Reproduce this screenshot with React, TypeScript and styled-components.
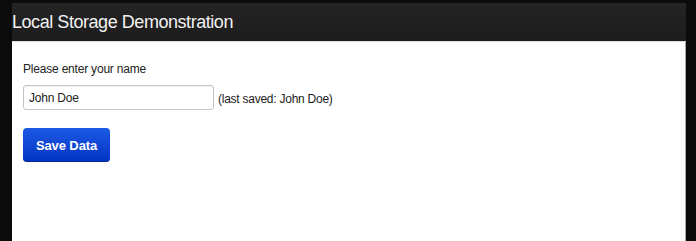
import React, { useState } from 'react';
import styled, { createGlobalStyle } from 'styled-components';

const GlobalStyle = createGlobalStyle`
  html, body {
    margin: 0;
    padding: 0;
    background: #0b0b0b;
  }
  body {
    font-family: "Liberation Sans", Arial, Helvetica, sans-serif;
  }
`;

const Frame = styled.div`
  height: 241px;
  box-sizing: border-box;
  padding: 3px 10px 0 12px;
  display: flex;
  flex-direction: column;
`;

const Header = styled.header`
  height: 38px;
  flex: 0 0 38px;
  display: flex;
  align-items: center;
  background: linear-gradient(#242424, #1c1c1c);
  color: #f2f2f2;
  font-size: 18px;
  letter-spacing: -0.45px;
`;

const Content = styled.main`
  flex: 1;
  background: #fff;
  border-top: 1px solid #dcdcdc;
  border-right: 1px solid #a8a8a8;
  padding: 20px 0 0 11px;
  box-sizing: border-box;
`;

const Label = styled.div`
  font-size: 12px;
  letter-spacing: -0.2px;
  color: #222;
  margin-bottom: 9px;
`;

const Row = styled.div`
  display: flex;
  align-items: center;
  gap: 4px;
`;

const NameInput = styled.input`
  width: 191px;
  height: 25px;
  box-sizing: border-box;
  border: 1px solid #c4c4c4;
  border-radius: 3px;
  padding: 0 5px;
  font-family: inherit;
  font-size: 12px;
  letter-spacing: -0.2px;
  color: #222;
  box-shadow: inset 0 1px 1px rgba(0, 0, 0, 0.06);
  outline: none;
`;

const Note = styled.span`
  font-size: 12px;
  letter-spacing: -0.25px;
  color: #222;
  padding-top: 2px;
`;

const SaveButton = styled.button`
  margin-top: 18px;
  width: 87px;
  height: 34px;
  border: none;
  border-radius: 4px;
  background: linear-gradient(#1c5ae4, #0333c4);
  box-shadow: inset 0 -1px 0 rgba(0, 0, 40, 0.3);
  color: #fff;
  font-family: inherit;
  font-size: 13px;
  font-weight: bold;
  letter-spacing: -0.1px;
  cursor: pointer;
  padding: 0;
`;

export default function App() {
  const [name, setName] = useState('John Doe');
  const [saved, setSaved] = useState('John Doe');

  return (
    <>
      <GlobalStyle />
      <Frame>
        <Header>Local Storage Demonstration</Header>
        <Content>
          <Label>Please enter your name</Label>
          <Row>
            <NameInput value={name} onChange={(e) => setName(e.target.value)} />
            <Note>(last saved: {saved})</Note>
          </Row>
          <SaveButton onClick={() => setSaved(name)}>Save Data</SaveButton>
        </Content>
      </Frame>
    </>
  );
}
